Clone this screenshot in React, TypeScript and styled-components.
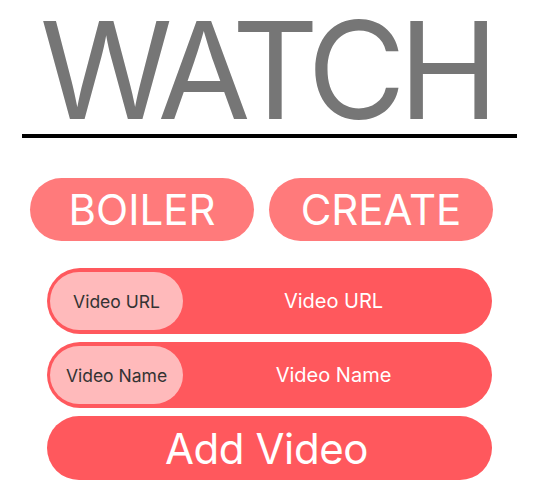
import React from "react";
import styled, { createGlobalStyle } from "styled-components";

const GlobalStyle = createGlobalStyle`
  html, body {
    margin: 0;
    padding: 0;
    background: #ffffff;
    font-family: "Inter", "Noto Sans", sans-serif;
  }
  * { box-sizing: border-box; }
`;

const Page = styled.div`
  width: 539px;
  display: flex;
  flex-direction: column;
  align-items: flex-start;
`;

const Title = styled.h1`
  margin: 0;
  width: 100%;
  text-align: center;
  font-family: "Inter", sans-serif;
  font-weight: 400;
  font-size: 135px;
  line-height: 135px;
  letter-spacing: -7.5px;
  color: #767676;
  height: 134px;
  padding: 3px 8px 0 0;
  overflow: visible;
`;

const Divider = styled.div`
  margin-left: 22px;
  width: 495px;
  height: 4px;
  background: #000000;
`;

const ButtonRow = styled.div`
  display: flex;
  gap: 15px;
  margin-left: 30px;
  margin-top: 40px;
`;

const PillButton = styled.button`
  width: 224px;
  height: 63px;
  border: none;
  border-radius: 32px;
  background: #ff7a7b;
  color: #ffffff;
  font-family: "Inter", sans-serif;
  font-size: 42px;
  font-weight: 400;
  padding: 0;
  display: flex;
  align-items: center;
  justify-content: center;
  cursor: pointer;
`;

const Form = styled.form`
  margin-left: 47px;
  margin-top: 27px;
  width: 445px;
  display: flex;
  flex-direction: column;
  gap: 8px;
`;

const Field = styled.div`
  height: 66px;
  border-radius: 33px;
  background: #ff585d;
  padding: 4px 4px 4px 3px;
  display: flex;
  align-items: stretch;
`;

const FieldLabel = styled.label`
  width: 133px;
  flex: none;
  border-radius: 30px;
  background: #ffbabb;
  color: #333333;
  font-family: "Inter", sans-serif;
  font-size: 17.5px;
  display: flex;
  align-items: center;
  justify-content: center;
`;

const FieldInput = styled.input`
  flex: 1;
  min-width: 0;
  border: none;
  outline: none;
  background: transparent;
  text-align: center;
  font-family: "Inter", sans-serif;
  font-size: 20px;
  color: #ffffff;
  padding: 0 4px 0 0;
  &::placeholder {
    color: #ffffff;
    opacity: 1;
  }
`;

const SubmitButton = styled.button`
  height: 64px;
  border: none;
  border-radius: 32px;
  background: #ff585d;
  color: #ffffff;
  font-family: "Inter", sans-serif;
  font-size: 42px;
  letter-spacing: -0.4px;
  font-weight: 400;
  padding: 0 6px 0 0;
  display: flex;
  align-items: center;
  justify-content: center;
`;

export default function App() {
  return (
    <>
      <GlobalStyle />
      <Page>
        <Title>WATCH</Title>
        <Divider />
        <ButtonRow>
          <PillButton type="button">BOILER</PillButton>
          <PillButton type="button">CREATE</PillButton>
        </ButtonRow>
        <Form onSubmit={(e) => e.preventDefault()}>
          <Field>
            <FieldLabel htmlFor="url">Video URL</FieldLabel>
            <FieldInput id="url" placeholder="Video URL" />
          </Field>
          <Field>
            <FieldLabel htmlFor="name">Video Name</FieldLabel>
            <FieldInput id="name" placeholder="Video Name" />
          </Field>
          <SubmitButton type="submit">Add Video</SubmitButton>
        </Form>
      </Page>
    </>
  );
}
